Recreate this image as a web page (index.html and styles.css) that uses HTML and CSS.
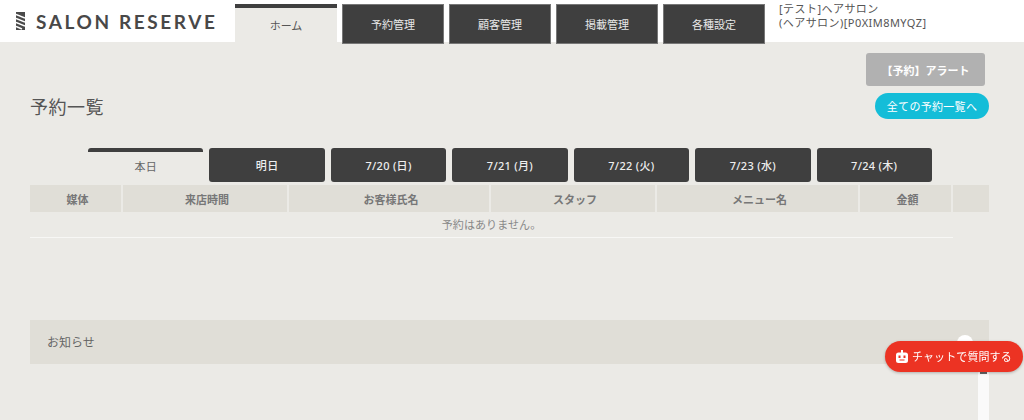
FILE: index.html
```html
<!DOCTYPE html>
<html lang="ja">
<head>
  <meta charset="UTF-8">
  <meta name="viewport" content="width=device-width, initial-scale=1.0">
  <title>予約一覧</title>
  <link rel="stylesheet" href="styles.css">
</head>
<body>
  <header class="header">
    <div class="logo">
      <svg class="logo-mark" width="9" height="18" viewBox="0 0 9 18">
        <rect width="9" height="18" fill="#4a4a4a"/>
        <path d="M0 2.500L9 6M0 6.500L9 10M0 10.500L9 14M0 14.500L6 17" stroke="#fff" stroke-width="1.500" fill="none"/>
      </svg>
      <span class="logo-text">SALON RESERVE</span>
    </div>
    <nav class="nav">
      <a class="nav-tab active">ホーム</a>
      <a class="nav-tab">予約管理</a>
      <a class="nav-tab">顧客管理</a>
      <a class="nav-tab">掲載管理</a>
      <a class="nav-tab">各種設定</a>
    </nav>
    <div class="account">[テスト]ヘアサロン<br>(ヘアサロン)[P0XIM8MYQZ]</div>
  </header>

  <main class="content">
    <div class="page-head">
      <h1 class="page-title">予約一覧</h1>
      <div class="page-actions">
        <button class="alert-button">【予約】アラート</button>
        <button class="all-button">全ての予約一覧へ</button>
      </div>
    </div>

    <div class="day-tabs">
      <a class="day-tab active">本日</a>
      <a class="day-tab">明日</a>
      <a class="day-tab">7/20 (日)</a>
      <a class="day-tab">7/21 (月)</a>
      <a class="day-tab">7/22 (火)</a>
      <a class="day-tab">7/23 (水)</a>
      <a class="day-tab">7/24 (木)</a>
    </div>

    <table class="reserve-table">
      <colgroup>
        <col class="col-media">
        <col class="col-time">
        <col class="col-name">
        <col class="col-staff">
        <col class="col-menu">
        <col class="col-price">
        <col>
      </colgroup>
      <thead>
        <tr>
          <th>媒体</th>
          <th>来店時間</th>
          <th>お客様氏名</th>
          <th>スタッフ</th>
          <th>メニュー名</th>
          <th>金額</th>
          <th></th>
        </tr>
      </thead>
      <tbody>
        <tr>
          <td class="empty" colspan="6">予約はありません。</td>
          <td></td>
        </tr>
      </tbody>
    </table>

    <section class="notice">
      <h2 class="notice-title">お知らせ</h2>
      <span class="notice-toggle"></span>
      <div class="notice-scroll"><span class="notice-thumb"></span></div>
    </section>
  </main>

  <a class="chat-button">
    <svg width="12" height="13" viewBox="0 0 12 13">
      <path d="M5 0h2v2.500h2.500A2.500 2.500 0 0 1 12 5v5.500A2.500 2.500 0 0 1 9.500 13h-7A2.500 2.500 0 0 1 0 10.500V5a2.500 2.500 0 0 1 2.500-2.500H5z" fill="#fff"/>
      <rect x="2.500" y="5.500" width="2" height="2.500" fill="#ec3323"/>
      <rect x="7.500" y="5.500" width="2" height="2.500" fill="#ec3323"/>
      <rect x="3.500" y="9.500" width="5" height="1" fill="#ec3323"/>
    </svg>
    チャットで質問する
  </a>
</body>
</html>
```

FILE: styles.css
```css
body {
  margin: 0;
  height: 420px;
  overflow: hidden;
  background-color: #ebeae6;
  color: #555;
  font-family: "Noto Sans", "Noto Sans CJK JP", sans-serif;
  font-size: 11px;
}
/* Header */
.header {
  display: flex;
  height: 42px;
  background-color: #fff;
}
.logo {
  display: flex;
  align-items: center;
  width: 235px;
  padding-left: 16px;
  box-sizing: border-box;
}
.logo-mark {
  margin-right: 11px;
}
.logo-text {
  color: #484848;
  font-family: Lato, sans-serif;
  font-size: 19px;
  font-weight: 700;
  letter-spacing: 2.600px;
  white-space: nowrap;
}
.nav {
  display: flex;
  gap: 5px;
  padding-top: 4px;
}
.nav-tab {
  display: flex;
  align-items: center;
  justify-content: center;
  width: 102px;
  height: 40px;
  padding-bottom: 1px;
  box-sizing: border-box;
  border: 1px solid #777;
  background-color: #3f3f3f;
  color: #e8e8e8;
}
.nav-tab.active {
  height: 38px;
  padding-bottom: 0;
  border: 0;
  border-top: 4px solid #3f3f3f;
  background-color: #ebeae6;
  color: #555;
}
.account {
  margin-left: 14px;
  padding-top: 2px;
  line-height: 14px;
  letter-spacing: 0.450px;
  white-space: nowrap;
}
/* Main */
.content {
  padding: 0 35px 0 30px;
}
.page-head {
  display: flex;
  justify-content: space-between;
  align-items: flex-end;
  padding-top: 11px;
}
.page-title {
  margin: 0 0 -1px;
  font-size: 18px;
  font-weight: 400;
  line-height: 26px;
  letter-spacing: 0.500px;
}
.page-actions {
  display: flex;
  flex-direction: column;
  align-items: flex-end;
  gap: 7px;
}
.alert-button {
  width: 119px;
  height: 33px;
  margin-right: 4px;
  padding: 0;
  border: 0;
  border-radius: 3px;
  background-color: #b1b1b1;
  color: #fff;
  font-family: inherit;
  font-size: 11px;
  font-weight: 700;
}
.all-button {
  width: 114px;
  height: 26px;
  padding: 0;
  border: 0;
  border-radius: 13px;
  background-color: #14bdd8;
  color: #fff;
  font-family: inherit;
  font-size: 11px;
  letter-spacing: 0.300px;
}
.day-tabs {
  display: flex;
  gap: 6px;
  width: 844px;
  margin: 29px 0 0 58px;
}
.day-tab {
  flex: 1;
  display: flex;
  align-items: center;
  justify-content: center;
  height: 34px;
  box-sizing: border-box;
  border-radius: 3px;
  background-color: #3f3f3f;
  color: #eee;
  font-weight: 500;
  letter-spacing: 0.300px;
}
.day-tab.active {
  padding-bottom: 3px;
  border-top: 4px solid #3f3f3f;
  background-color: transparent;
  color: #666;
  font-weight: 400;
}
.reserve-table {
  width: 959px;
  margin-top: 3px;
  border-collapse: separate;
  border-spacing: 0;
  table-layout: fixed;
}
.col-media { width: 93px; }
.col-time { width: 166px; }
.col-name { width: 202px; }
.col-staff { width: 166px; }
.col-menu { width: 203px; }
.col-price { width: 93px; }
.reserve-table th {
  height: 27px;
  padding: 0 0 0 4px;
  border-right: 2px solid #ebeae6;
  background-color: #e0ded7;
  color: #777;
  font-size: 11px;
  font-weight: 700;
}
.reserve-table th:last-child {
  border-right: 0;
}
.reserve-table td {
  padding: 0;
}
.reserve-table .empty {
  height: 26px;
  padding-bottom: 2px;
  box-sizing: border-box;
  border-bottom: 1px solid #f7f7f5;
  color: #888;
  font-size: 11px;
  letter-spacing: 0.100px;
  text-align: center;
}
/* Notice */
.notice {
  position: relative;
  height: 44px;
  margin-top: 82px;
  background-color: #e0ded7;
}
.notice-title {
  margin: 0;
  padding: 2px 0 0 17px;
  color: #666;
  font-size: 12px;
  font-weight: 400;
  line-height: 42px;
}
.notice-toggle {
  position: absolute;
  top: 15px;
  right: 16px;
  width: 16px;
  height: 16px;
  border-radius: 50%;
  background-color: #fff;
}
.notice-scroll {
  position: absolute;
  top: 52px;
  right: 0;
  display: flex;
  justify-content: center;
  width: 11px;
  height: 48px;
  background-color: #fafafa;
}
.notice-thumb {
  width: 7px;
  height: 2px;
  background-color: #666;
}
.chat-button {
  position: fixed;
  left: 885px;
  top: 341px;
  display: flex;
  align-items: center;
  gap: 4px;
  width: 138px;
  height: 31px;
  padding: 0 0 1px 11px;
  box-sizing: border-box;
  border-radius: 16px;
  background-color: #ec3323;
  box-shadow: 0 1px 3px rgba(0, 0, 0, 0.25);
  color: #fff;
  font-size: 11px;
  letter-spacing: 0.100px;
  white-space: nowrap;
}
```
